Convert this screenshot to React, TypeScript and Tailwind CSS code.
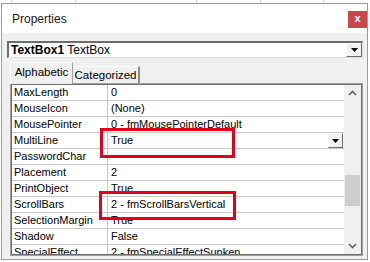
import React from 'react';

interface Prop {
    name: string;
    value: string;
    dropdown?: boolean;
}

const props: Prop[] = [
    { name: 'MaxLength', value: '0' },
    { name: 'MouseIcon', value: '(None)' },
    { name: 'MousePointer', value: '0 - fmMousePointerDefault' },
    { name: 'MultiLine', value: 'True', dropdown: true },
    { name: 'PasswordChar', value: '' },
    { name: 'Placement', value: '2' },
    { name: 'PrintObject', value: 'True' },
    { name: 'ScrollBars', value: '2 - fmScrollBarsVertical' },
    { name: 'SelectionMargin', value: 'True' },
    { name: 'Shadow', value: 'False' },
    { name: 'SpecialEffect', value: '2 - fmSpecialEffectSunken' },
];

function DownTriangle() {
    return (
        <svg width="7" height="4" viewBox="0 0 7 4">
            <path d="M0 0 H7 L3.5 4 Z" fill="#000" />
        </svg>
    );
}

function Chevron({ up }: { up?: boolean }) {
    return (
        <svg width="9" height="6" viewBox="0 0 9 6">
            <path
                d={up ? 'M1 5 L4.5 1.5 L8 5' : 'M1 1 L4.5 4.5 L8 1'}
                fill="none"
                stroke="#606060"
                strokeWidth="1.6"
            />
        </svg>
    );
}

export default function App() {
    return (
        <div
            className="relative w-[370px] h-[262px] bg-white overflow-hidden"
            style={{ fontFamily: '"Liberation Sans", Arial, sans-serif' }}
        >
            {/* excel gridlines behind the window */}
            <div className="flex h-[3px]">
                <div className="w-[12px] border-r border-[#d4d4d4]" />
                <div className="w-[64px] border-r border-[#d4d4d4]" />
                <div className="w-[121px] border-r border-[#d4d4d4]" />
                <div className="w-[64px] border-r border-[#d4d4d4]" />
                <div className="w-[63px] border-r border-[#d4d4d4]" />
            </div>

            <div className="ml-[1px] w-[367px] h-[257px] border border-[#9b9b9b] flex flex-col">
                {/* title bar */}
                <div className="h-[29px] bg-white flex items-center justify-between pl-[10px]">
                    <span className="text-[12px] text-[#1a1a1a] mt-[1px]">Properties</span>
                    <div className="w-[19px] h-[17px] bg-[#c9474d] flex items-center justify-center mt-[1px]">
                        <span className="text-white text-[11px] font-bold leading-none mb-[2px]">x</span>
                    </div>
                </div>

                {/* body */}
                <div className="flex-1 bg-[#f0f0f0] flex flex-col pt-[8px] pl-[5px] pr-[3px]">
                    {/* object combobox */}
                    <div className="h-[17px] w-[356px] bg-white border-t-2 border-l-2 border-[#6d6d6d] border-r border-b border-r-[#dcdcdc] border-b-[#dcdcdc] flex items-center justify-between">
                        <span className="text-[12px] text-black pl-[2px] leading-none">
                            <span className="font-bold">TextBox1</span> TextBox
                        </span>
                        <div className="w-[16px] h-[14px] bg-[#f0f0f0] border-t border-l border-white border-r border-b border-r-[#6d6d6d] border-b-[#6d6d6d] flex items-center justify-center">
                            <DownTriangle />
                        </div>
                    </div>

                    {/* tabs */}
                    <div className="flex items-end h-[25px] pl-[3px]">
                        <div className="h-[22px] w-[63px] border-t border-l border-white border-r border-r-[#a0a0a0] flex items-center justify-center mb-[-1px] relative z-10 bg-[#f0f0f0]">
                            <span className="text-[11.5px] text-black mb-[2px]">Alphabetic</span>
                        </div>
                        <div className="h-[17px] w-[67px] border-t border-white border-r-2 border-r-[#8a8a8a] flex items-center justify-center">
                            <span className="text-[11.5px] text-black mt-[1px]">Categorized</span>
                        </div>
                    </div>

                    {/* property grid */}
                    <div className="ml-[3px] w-[353px] h-[173px] border border-[#a0a0a0]">
                        <div className="h-full border border-[#6d6d6d] flex">
                            <div className="w-[332px] h-full bg-white overflow-hidden">
                                {props.map((p) => (
                                    <div key={p.name} className="h-[16px] flex border-b border-[#c8c8c8] text-[11px] text-black">
                                        <div className="w-[96px] border-r border-[#c8c8c8] pl-[2px] flex items-center leading-none">
                                            {p.name}
                                        </div>
                                        <div className="flex-1 pl-[3px] pr-[1px] flex items-center justify-between leading-none">
                                            <span>{p.value}</span>
                                            {p.dropdown && (
                                                <div className="w-[15px] h-[15px] bg-[#f0f0f0] border-t border-l border-white border-r border-b border-r-[#6d6d6d] border-b-[#6d6d6d] flex items-center justify-center">
                                                    <DownTriangle />
                                                </div>
                                            )}
                                        </div>
                                    </div>
                                ))}
                            </div>
                            {/* scrollbar */}
                            <div className="w-[16px] h-full bg-[#f0f0f0] flex flex-col items-center">
                                <div className="h-[16px] flex items-center justify-center">
                                    <Chevron up />
                                </div>
                                <div className="mt-[74px] w-[15px] h-[31px] bg-[#cdcdcd]" />
                                <div className="flex-1" />
                                <div className="h-[16px] flex items-center justify-center">
                                    <Chevron />
                                </div>
                            </div>
                        </div>
                    </div>
                </div>
            </div>

            {/* highlight boxes */}
            <div className="absolute left-[100px] top-[128px] w-[135px] h-[30px] border-[3px] border-[#e3001b]" />
            <div className="absolute left-[99px] top-[191px] w-[137px] h-[29px] border-[3px] border-[#e3001b]" />
        </div>
    );
}
